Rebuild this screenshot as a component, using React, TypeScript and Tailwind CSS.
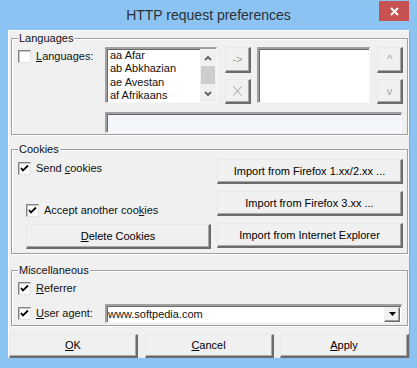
import * as React from 'react';

const languages = ['aa Afar', 'ab Abkhazian', 'ae Avestan', 'af Afrikaans'];

function Check({ checked }: { checked?: boolean }) {
  return (
    <span className="flex h-[13px] w-[13px] shrink-0 items-center justify-center border border-t-[#838383] border-l-[#838383] border-b-[#e3e3e3] border-r-[#e3e3e3] bg-white shadow-[inset_1px_1px_0_#c4c4c4]">
      {checked && (
        <svg width="9" height="9" viewBox="0 0 9 9">
          <path d="M1 4 L3 6.5 L8 1.5" fill="none" stroke="#000" strokeWidth="1.8" />
        </svg>
      )}
    </span>
  );
}

function Raised({ className = '', children, disabled }: { className?: string; children: React.ReactNode; disabled?: boolean }) {
  return (
    <div
      className={`flex items-center justify-center border-t border-l border-b-2 border-r-2 border-t-[#e8e8e8] border-l-[#e8e8e8] border-b-[#6b6b6b] border-r-[#6b6b6b] bg-[#f0f0f0] shadow-[inset_-1px_-1px_0_#a8a8a8] ${disabled ? 'text-[#a0a0a0]' : 'text-black'} ${className}`}
    >
      {children}
    </div>
  );
}

function Sunken({ className = '', children }: { className?: string; children?: React.ReactNode }) {
  return (
    <div className={`border-t-2 border-l-2 border-b border-r border-t-[#a0a0a0] border-l-[#a0a0a0] border-b-[#f8f8f8] border-r-[#f8f8f8] shadow-[inset_1px_1px_0_#696969] ${className}`}>
      {children}
    </div>
  );
}

function Group({ label, className = '', children }: { label: string; className?: string; children: React.ReactNode }) {
  return (
    <div className={`relative ml-[2px] w-[397px] border border-[#a0a0a0] shadow-[inset_1px_1px_0_#fff,1px_1px_0_#fff] ${className}`}>
      <span className="absolute -top-[8px] left-[6px] bg-[#f0f0f0] px-[1px] leading-[14px]">{label}</span>
      {children}
    </div>
  );
}

export default function App() {
  return (
    <div className="flex h-[368px] w-[417px] flex-col bg-[#8bc3f3] font-['Liberation_Sans',Arial,sans-serif] text-[11px] text-[#111]">
      {/* Title bar */}
      <div className="relative flex h-[30px] items-center justify-center">
        <span className="text-[14px] text-[#2a2f38]">HTTP request preferences</span>
        <div className="absolute right-[8px] top-[1px] flex h-[20px] w-[30px] items-center justify-center bg-[#c75050]">
          <svg width="9" height="9" viewBox="0 0 9 9">
            <path d="M1 1 L8 8 M8 1 L1 8" stroke="#fff" strokeWidth="2" />
          </svg>
        </div>
      </div>

      {/* Client area */}
      <div className="ml-[8px] flex w-[402px] flex-col border-t border-l border-t-white border-l-white border-r border-r-[#a0a0a0] bg-[#f0f0f0] pt-[7px]">
        <Group label="Languages" className="h-[97px]">
          <div className="flex pt-[8px]">
            <div className="flex h-[13px] w-[93px] items-center gap-[5px] self-start pl-[6px] mt-[3px]">
              <Check />
              <span><u>L</u>anguages:</span>
            </div>
            <Sunken className="flex h-[56px] w-[112px] bg-white">
              <div className="flex-1 pl-[3px] leading-[13.3px]">
                {languages.map((l) => (
                  <div key={l}>{l}</div>
                ))}
              </div>
              <div className="flex w-[16px] flex-col bg-[#f0f0f0]">
                <div className="flex h-[17px] items-center justify-center">
                  <svg width="8" height="6" viewBox="0 0 8 6">
                    <path d="M1 5 L4 2 L7 5" fill="none" stroke="#606060" strokeWidth="1.8" />
                  </svg>
                </div>
                <div className="mx-[1px] h-[18px] bg-[#cdcdcd]" />
                <div className="flex-1" />
                <div className="flex h-[17px] items-center justify-center">
                  <svg width="8" height="6" viewBox="0 0 8 6">
                    <path d="M1 1 L4 4 L7 1" fill="none" stroke="#606060" strokeWidth="1.8" />
                  </svg>
                </div>
              </div>
            </Sunken>
            <div className="ml-[8px] flex flex-col gap-[6px]">
              <Raised disabled className="h-[26px] w-[26px]">-&gt;</Raised>
              <Raised disabled className="h-[25px] w-[26px]">
                <svg width="9" height="10" viewBox="0 0 9 10">
                  <path d="M0.5 0.5 L8.5 9.5 M8.5 0.5 L0.5 9.5" stroke="#a0a0a0" strokeWidth="1" fill="none" />
                </svg>
              </Raised>
            </div>
            <Sunken className="ml-[6px] h-[56px] w-[113px] bg-white" />
            <div className="ml-[7px] flex flex-col gap-[6px]">
              <Raised disabled className="h-[26px] w-[26px]">^</Raised>
              <Raised disabled className="h-[25px] w-[26px]">v</Raised>
            </div>
          </div>
          <Sunken className="ml-[93px] mt-[8px] h-[21px] w-[297px] bg-[#f3f6fb]" />
        </Group>

        <Group label="Cookies" className="mt-[14px] h-[105px]">
          <div className="flex justify-between pr-[4px] pt-[9px]">
            <div className="flex flex-col pl-[6px]">
              <div className="mt-[3px] flex h-[13px] items-center gap-[5px]">
                <Check checked />
                <span>Send <u>c</u>ookies</span>
              </div>
              <div className="ml-[8px] mt-[29px] flex h-[13px] items-center gap-[5px]">
                <Check checked />
                <span>Accept another coo<u>k</u>ies</span>
              </div>
              <Raised className="ml-[8px] mt-[7px] h-[25px] w-[185px]">
                <span><u>D</u>elete Cookies</span>
              </Raised>
            </div>
            <div className="flex flex-col gap-[7px]">
              <Raised className="h-[25px] w-[186px]">Import from Firefox 1.xx/2.xx ...</Raised>
              <Raised className="h-[25px] w-[186px]">Import from Firefox 3.xx ...</Raised>
              <Raised className="h-[25px] w-[186px]">Import from Internet Explorer</Raised>
            </div>
          </div>
        </Group>

        <Group label="Miscellaneous" className="mt-[16px] h-[56px]">
          <div className="flex flex-col pl-[6px] pt-[11px]">
            <div className="flex h-[13px] items-center gap-[5px]">
              <Check checked />
              <span><u>R</u>eferrer</span>
            </div>
            <div className="mt-[9px] flex items-center">
              <div className="flex w-[87px] items-center gap-[5px]">
                <Check checked />
                <span><u>U</u>ser agent:</span>
              </div>
              <Sunken className="flex h-[19px] w-[297px] items-center bg-white">
                <span className="flex-1 pl-[1px]">www.softpedia.com</span>
                <div className="mr-[1px] flex h-[15px] w-[16px] items-center justify-center border-t border-l border-b border-r border-t-[#f0f0f0] border-l-[#f0f0f0] border-b-[#696969] border-r-[#696969] bg-[#f0f0f0] shadow-[inset_-1px_-1px_0_#a0a0a0]">
                  <svg width="7" height="4" viewBox="0 0 7 4">
                    <path d="M0 0 H7 L3.5 4 Z" fill="#000" />
                  </svg>
                </div>
              </Sunken>
            </div>
          </div>
        </Group>

        <div className="mt-[8px] flex justify-between">
          <Raised className="h-[24px] w-[129px]"><span><u>O</u>K</span></Raised>
          <Raised className="h-[24px] w-[129px]"><span><u>C</u>ancel</span></Raised>
          <Raised className="h-[24px] w-[129px]"><span><u>A</u>pply</span></Raised>
        </div>
      </div>
    </div>
  );
}
